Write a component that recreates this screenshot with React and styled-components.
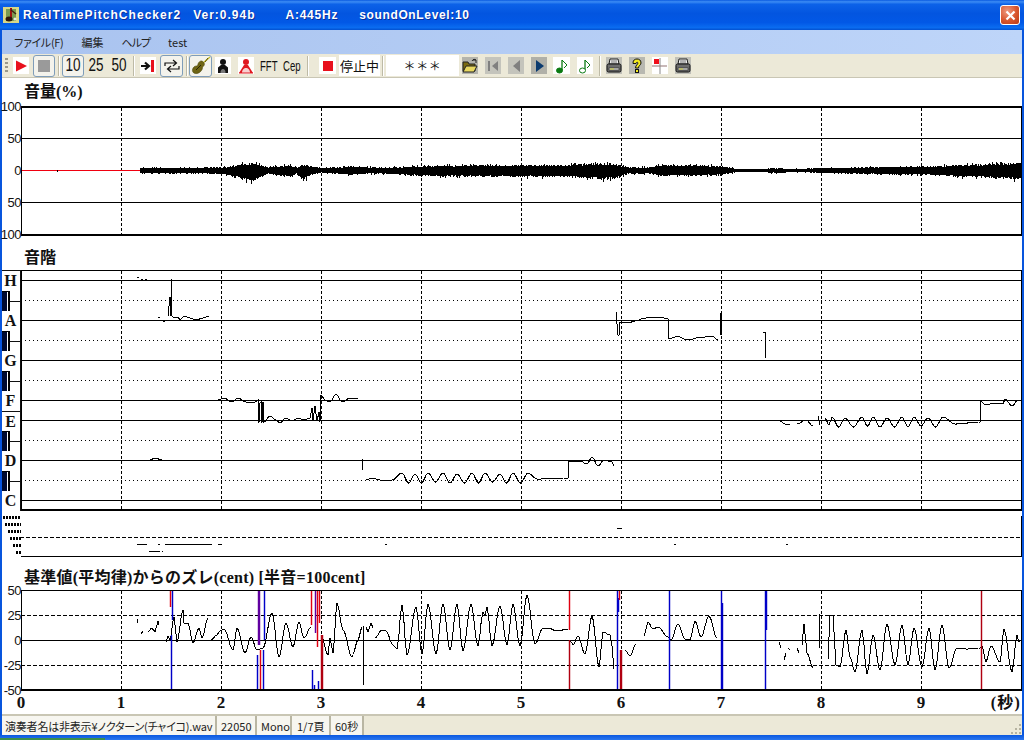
import React from 'react';
import styled, { createGlobalStyle } from 'styled-components';

const Global = createGlobalStyle`
  html, body { margin: 0; padding: 0; overflow: hidden; background: #0855dd; }
  #root { width: 1024px; height: 740px; }
`;

const UI = `"Liberation Sans", "Noto Sans CJK JP", sans-serif`;
const SERIF = `"Liberation Serif", "Noto Sans CJK JP", serif`;
const JP = `"Noto Sans CJK JP", "Liberation Sans", sans-serif`;

const Win = styled.div`
  width: 1024px; height: 740px; display: flex; flex-direction: column; overflow: hidden;
  background: #0855dd; font-family: ${UI};
`;
const TitleBar = styled.div`
  height: 30px; flex: none; box-sizing: border-box; display: flex; align-items: center; padding: 0 4px 0 3px;
  background: linear-gradient(180deg, #0a5ae0 0%, #3c8cf4 6%, #0c62e8 14%, #0355e0 45%, #0258e6 75%, #0a6cf0 92%, #0250d0 100%);
`;
const AppIcon = styled.svg`width: 16px; height: 16px; flex: none; margin-right: 4px;`;
const TitleText = styled.div`
  flex: 1; display: flex; color: #fff; font: bold 12px ${UI};
  text-shadow: 1px 1px 0 #0b2f9c; white-space: nowrap;
`;
const TitlePart = styled.span`margin-left: ${p => p.$ml || 0}px; letter-spacing: ${p => p.$ls}px;`;
const CloseBtn = styled.div`
  width: 20px; height: 20px; box-sizing: border-box; border: 1px solid #fff; border-radius: 3px; display: flex; align-items: center; justify-content: center;
  background: radial-gradient(circle at 35% 30%, #ee9a80, #d8552c 55%, #b93a17);
`;
const MenuBar = styled.div`
  height: 24px; flex: none; margin: 0 2px; display: flex; align-items: center;
  background: linear-gradient(90deg, #a9c3ef, #bed5f9); font: 11px ${JP}; font-feature-settings: "palt"; color: #222;
`;
const MenuItem = styled.span`margin-left: ${p => p.$ml}px; white-space: nowrap; letter-spacing: ${p => p.$ls || 0}px;`;
const Toolbar = styled.div`
  height: 24px; flex: none; box-sizing: border-box; margin: 0 2px; display: flex; align-items: center; padding-left: 3px;
  background: #ece9d8; border-bottom: 1px solid #c9c6b4;
`;
const Grip = styled.div`
  width: 3px; height: 16px; flex: none;
  background: repeating-linear-gradient(180deg, #9a9889 0 2px, transparent 2px 4px);
`;
const Sep = styled.div`
  width: 1px; height: 20px; flex: none; margin-left: ${p => p.$ml}px; margin-right: 1px;
  background: #bdbaa6; box-shadow: 1px 0 0 #fff;
`;
const Tool = styled.div`
  flex: none; display: flex; align-items: center; justify-content: center;
  width: ${p => p.$w || 16}px; height: ${p => (p.$on ? 22 : 17)}px; margin-left: ${p => p.$ml}px;
  background: ${p => (p.$on ? '#f4f3ec' : p.$bg || 'transparent')};
  border: ${p => (p.$on ? '1px solid #7f9db9' : 'none')}; border-radius: ${p => (p.$on ? 3 : 0)}px;
  box-sizing: border-box; color: #111;
`;
const Narrow = styled.span`
  display: inline-block; font: ${p => p.$s || 18}px ${UI}; transform: scaleX(${p => p.$x || 0.75}); white-space: nowrap;
`;
const ToolField = styled.div`
  flex: none; height: 21px; width: ${p => p.$w}px; margin-left: ${p => p.$ml}px; background: #fff; color: #111;
  display: flex; align-items: center; justify-content: center; padding-bottom: 1px; box-sizing: border-box;
  font: ${p => p.$s || 13}px ${JP}; white-space: nowrap; letter-spacing: ${p => p.$ls || 0}px;
`;
const Client = styled.div`
  height: 636px; flex: none; margin: 0 2px; background: #fff; display: flex; flex-direction: column;
`;
const Heading = styled.div`
  height: ${p => p.$h}px; flex: none; box-sizing: border-box; padding: ${p => p.$pt}px 0 0 22px;
  font: bold 16px/18px ${SERIF}; letter-spacing: ${p => p.$ls || 0}px; color: #111; white-space: nowrap;
`;
const PlotRow = styled.div`display: flex; flex: none; height: ${p => p.$h}px;`;
const Axis = styled.div`
  width: 19px; flex: none; display: flex; flex-direction: column; margin-top: ${p => -p.$step / 2}px; position: relative; z-index: 1;
`;
const AxisLabel = styled.div`
  height: ${p => p.$step}px; flex: none; display: flex; align-items: center; justify-content: flex-end;
  font: 13px ${UI}; color: #111; letter-spacing: -0.5px; white-space: nowrap;
`;
const Plot = styled.svg`
  display: block; flex: none; width: ${p => p.$w || 1001}px; height: ${p => p.$h}px; shape-rendering: crispEdges;
`;
const KeyColumn = styled.div`
  width: 18px; flex: none; border-right: 1px solid #111; border-top: 1px solid #111;
  display: flex; flex-direction: column; height: 240px;
`;
const WhiteKey = styled.div`
  height: 20px; flex: none; box-sizing: border-box; display: flex; align-items: center; justify-content: center;
  padding-right: 1px; font: bold 16px/16px ${SERIF}; color: #111; border-top: ${p => (p.$line ? '1px solid #111' : 'none')};
`;
const BlackKey = styled.div`
  height: 20px; flex: none; box-sizing: border-box; position: relative; width: 8px;
  background: linear-gradient(90deg, #000a30 0 5px, #fff 5px 6px, #000 6px); border-top: 1px solid #000;
  &::after { content: ''; position: absolute; left: 8px; top: 9px; width: 10px; height: 1px; background: #111; }
`;
const Ticks = styled.div`
  height: 23px; flex: none; display: flex; align-items: center; font: bold 17px/18px ${SERIF}; color: #111; padding-top: 1px; box-sizing: border-box;
`;
const Tick = styled.div`width: 100px; flex: none; text-align: center; margin-left: ${p => p.$ml || 0}px;`;
const Unit = styled.div`margin-left: auto; margin-right: 1px; white-space: nowrap; font-size: 16px; letter-spacing: 1.2px;`;
const Status = styled.div`
  height: 21px; flex: none; margin: 0 2px; background: #ece9d8; border-top: 2px solid #c9c6b4; box-sizing: border-box;
  display: flex; align-items: stretch; font: 11px ${JP}; font-feature-settings: "palt"; color: #222;
`;
const StatusCell = styled.div`
  width: ${p => p.$w}px; flex: none; box-sizing: border-box; background: #f7f6f0; border-right: 2px solid #b9b6a3;
  display: flex; align-items: center; padding-left: ${p => p.$pl || 0}px; white-space: nowrap; letter-spacing: ${p => p.$ls || 0}px;
`;
const StatusFill = styled.div`flex: 1; display: flex; justify-content: flex-end; align-items: flex-end;`;
const GripSvg = styled.svg`width: 13px; height: 13px;`;
const BottomEdge = styled.div`height: 5px; flex: none; display: flex; align-items: flex-end; background: linear-gradient(180deg, #0a58e0, #2a76ee);`;
const StartPiece = styled.div`width: 105px; height: 2px; background: #3c8f4a;`;

// ---------- data helpers ----------
function rng(seed) { let s = seed; return () => { s = (s * 16807) % 2147483647; return s / 2147483647; }; }

const ENV = [[140,2.6,2.6],[170,2.2,2.6],[200,2.6,2.6],[225,3,3.6],[232,4,6],[240,6,8],[253,7,11],[262,5,6],[268,3,3],[290,5,6],[296,2.5,3],[303,6,10],[311,4,4],[321,2,2],[340,3,3],[353,4,4],[365,3,3],[387,2.5,3],[420,4,5],[480,5,6],[500,4.5,5.5],[520,5,6],[560,5,6],[585,6,7],[605,7,9],[620,5,7],[625,3,3],[650,3,3],[660,5,5],[680,5,5],[700,5,5],[720,4,4],[733,2,2],[737,.6,.6],[765,.6,.6],[768,2,2],[780,2,2],[790,1,1],[818,2,2],[900,3.5,4],[930,4,4],[960,5,6],[990,6,7],[1021,8,9]];
function envelope(x) {
  for (let i = 1; i < ENV.length; i++) {
    if (x <= ENV[i][0]) {
      const a = ENV[i - 1], b = ENV[i], t = (x - a[0]) / (b[0] - a[0]);
      return [a[1] + (b[1] - a[1]) * t, a[2] + (b[2] - a[2]) * t];
    }
  }
  return [0, 0];
}
function wavePath() {
  const r = rng(4711); let d = '';
  for (let x = 140; x < 1021; x++) {
    const [u, v] = envelope(x);
    const spike = () => { const k = r(); return k > 0.92 ? 1.25 : 0.72 + r() * 0.33; };
    const up = Math.max(0.6, u * spike());
    const dn = Math.max(0.6, v * spike());
    d += `M${x}.5 ${Math.round(170 - up)}V${Math.round(171 + dn)}`;
  }
  return d;
}
// Cosine-eased line through extrema, so that the peaks come out round.
function smooth(pts) {
  const out = [];
  for (let i = 0; i < pts.length - 1; i++) {
    const [x0, y0] = pts[i], [x1, y1] = pts[i + 1];
    const n = Math.max(1, Math.round((x1 - x0) / 1.5));
    for (let k = 0; k < n; k++) {
      const t = k / n, e = (1 - Math.cos(Math.PI * t)) / 2;
      out.push(`${(x0 + (x1 - x0) * t).toFixed(1)},${(y0 + (y1 - y0) * e).toFixed(1)}`);
    }
  }
  const l = pts[pts.length - 1];
  out.push(`${l[0]},${l[1]}`);
  return out.join(' ');
}
function scallop(peaks, top, bottom) {
  const p = [];
  peaks.forEach((x, i) => {
    p.push([x, top + (i % 3 === 1 ? 1 : 0)]);
    if (i < peaks.length - 1) p.push([(x + peaks[i + 1]) / 2, bottom - (i % 4 === 2 ? 1 : 0)]);
  });
  return p;
}

const X_GRID = [121, 221, 321, 421, 521, 621, 721, 821, 921];
const VolPath = wavePath();

const PITCH = [
  [[137,277],[139,278]], [[141,279],[143,279]], [[145,279],[147,279]],
  [[158,318],[160,317]], [[163,321],[165,321]],
  [[168,316],[170,297],[170,316],[171,297],[171,279],[172,316],[174,318],[178,317],[180,320],[184,316],[190,318],[196,320],[203,318],[209,316]],
  [[150,460],[155,458],[162,460]],
  [[210,400],[218,400],[224,398],[232,402],[238,398],[246,402],[255,402],[258,400],[258,422],[259,422],[260,403],[261,402],[261,422],[262,422],[263,402],[263,422],[264,422],[270,416],[276,420],[280,423],[286,418],[292,421],[298,418],[304,420],[310,418],[312,408],[313,420],[315,406],[317,421],[319,412],[320,422],[321,395],[325,400],[330,402],[336,394],[342,402],[350,398],[358,398]],
  [[362,459],[363,470]],
  [[366,480],[372,478],[380,480],[392,480],...scallop([402,415,428,443,457,472,485,500,513,528],473,483),[537,479],[568,478],[569,461],[580,461],[587,464],[592,457],[598,466],[604,460],[612,462],[614,466]],
  [[616,312],[618,335],[619,335],[620,322],[622,322],[628,323],[635,321],[645,318],[655,317],[665,318],[668,319],[669,339],[672,338],[678,336],[684,339],[690,340],[696,338],[705,337],[712,336],[718,340]],
  [[720,313],[721,335]], [[721,313],[722,335]],
  [[763,332],[765,332],[766,358]],
  [[780,421],[785,424],[790,425]], [[797,424],[806,420],[813,426]], [[818,416],[820,425]],
  [[825,418],[829,425],...scallop([832,845,862,873,887,902,914,928,943],417,427),[955,424],[980,422],[981,401],[985,405],[995,403],[1003,404],[1005,399],[1012,406],[1018,400],[1021,400]],
];

const CENT = [
  [[137,619],[138,623]], [[141,634],[143,631]], [[148,632],[152,628],[155,632],[158,621],[159,625]],
  [[166,642],[168,636],[170,640],[174,617],[177,642],[183,610],[184,623],[188,623],[193,643],[199,628],[202,638],[208,618]],
  [[211,640],[217,635],[220,631],[224,629],[233,650],[237,628],[245,653],[251,637],[257,650],[263,648],[272,613],[279,657],[286,623],[293,647],[299,622],[304,638],[311,627]],
  [[321,635],[328,655],[330,638],[333,653],[337,603],[343,630],[352,657],[358,640],[362,627]],
  [[363,626],[363,685]],
  [[366,627],[368,632],[371,623],[373,628]],
  [[375,638],[382,630],[386,631],[393,645],[397,649],[402,605],[407,655],[416,607],[422,654],[428,604],[436,654],[443,604],[450,650],[457,604],[463,651],[471,604],[478,646],[483,612],[485,616],[487,607],[492,646],[500,606],[507,645],[513,604],[520,646],[527,595],[535,644],[543,628],[548,628],[557,631],[568,629]],
  [[570,640],[573,645],[578,636],[585,654],[592,616],[599,667],[603,632],[610,635],[612,646],[614,669]],
  [[625,650],[630,656],[636,644]],
  [[644,636],[648,622],[653,629],[658,627],[668,637],[671,640],[678,624],[685,639],[690,640],[695,621],[701,637],[709,616],[717,638]],
  [[779,642],[781,648]], [[784,660],[786,653]], [[788,648],[790,650]], [[797,648],[799,653]],
  [[802,645],[804,624],[807,653],[813,668]],
  [[819,613],[820,648]],
  [[828,660],[830,615],[833,615],[836,665],[840,667],[846,630],[850,657],[855,672],[862,630],[867,674],[873,635],[880,670],[887,624],[895,665],[902,625],[908,665],[914,628],[922,667],[929,628],[935,670],[942,625],[949,668],[957,648],[967,649],[980,648],[982,646],[986,662],[991,646],[1000,662],[1004,629],[1012,672],[1017,635],[1019,642],[1021,640]],
];

const BLUE = '#0000c8', RED = '#e00010', DKRED = '#b00010', PURPLE = '#6000a0';
const MARKS = [
  [170, 590, 607, RED, 1], [172, 590, 620, BLUE, 1], [171, 635, 690, BLUE, 1],
  [258, 590, 645, PURPLE, 2], [264, 590, 640, BLUE, 1], [257, 655, 690, BLUE, 1], [260, 650, 690, RED, 1], [263, 650, 690, BLUE, 1],
  [311, 590, 625, RED, 1], [315, 590, 633, PURPLE, 1], [317, 590, 647, RED, 1], [319, 590, 623, RED, 1],
  [312, 670, 690, BLUE, 1], [318, 681, 690, BLUE, 1], [314, 685, 690, BLUE, 1], [321, 635, 690, DKRED, 2],
  [569, 590, 630, RED, 1], [569, 640, 690, DKRED, 1],
  [617, 590, 690, BLUE, 1], [618, 598, 612, BLUE, 1], [619, 590, 600, RED, 1], [620, 650, 690, DKRED, 2],
  [669, 590, 690, BLUE, 1], [721, 590, 690, BLUE, 1], [722, 603, 690, BLUE, 1],
  [765, 590, 690, BLUE, 1], [766, 590, 630, BLUE, 1], [981, 590, 690, DKRED, 1],
];

const Strips = [
  [137, 147, 544], [158, 160, 544], [165, 212, 544], [218, 222, 544],
  [149, 160, 551], [162, 163, 551], [617, 622, 528], [385, 387, 544], [674, 676, 544], [786, 788, 544],
  [540, 541, 537], [620, 623, 537],
];
const DOT_ROWS = [[3, 516], [5, 523], [8, 530], [10, 537], [13, 544], [16, 551]];

const Grid = ({ y0, y1 }) => (
  <g stroke="#000" strokeDasharray="3 2" fill="none">
    {X_GRID.map(x => <line key={x} x1={x + 0.5} x2={x + 0.5} y1={y0} y2={y1} />)}
  </g>
);
const HLine = ({ y, kind, x0 = 21 }) => (
  <line x1={x0} x2="1022" y1={y + 0.5} y2={y + 0.5} stroke="#000"
    strokeDasharray={kind === 'dash' ? '4 2' : kind === 'dot' ? '1 3' : undefined} />
);

const VolumeChart = () => (
  <Plot $h={130} viewBox="21 106 1001 130">
    <Grid y0={108} y1={234} />
    <HLine y={138} /><HLine y={170} /><HLine y={202} />
    <path d={VolPath} stroke="#000" fill="none" />
    <line x1="21" x2="140" y1="170.5" y2="170.5" stroke="#f00010" />
    <line x1="57.5" x2="57.5" y1="170" y2="172" stroke="#000" />
    <rect x="21" y="106" width="1001" height="2" fill="#000" />
    <rect x="21" y="234" width="1001" height="2" fill="#000" />
    <rect x="21" y="106" width="1" height="130" fill="#000" />
    <rect x="1021" y="106" width="1" height="130" fill="#000" />
  </Plot>
);

const PitchChart = () => (
  <Plot $h={241} viewBox="21 270 1001 241">
    <Grid y0={271} y1={509} />
    {[280, 320, 360, 400, 420, 460, 500].map(y => <HLine key={y} y={y} />)}
    {[300, 340, 380, 440, 480].map(y => <HLine key={y} y={y} kind="dot" />)}
    {PITCH.map((p, i) => <polyline key={i} points={smooth(p)} fill="none" stroke="#000" />)}
    <rect x="21" y="270" width="1001" height="1" fill="#000" />
    <rect x="21" y="509" width="1001" height="2" fill="#000" />
    <rect x="21" y="270" width="1" height="241" fill="#000" />
    <rect x="1021" y="270" width="1" height="241" fill="#000" />
  </Plot>
);

const StripChart = () => (
  <Plot $w={1020} $h={47} viewBox="2 511 1020 47">
    {DOT_ROWS.map(([x, y]) => (
      <g key={y} fill="#000">
        <rect x={x} y={y} width={21 - x} height="3" fill="#000" />
        {Array.from({ length: Math.ceil((21 - x) / 3) }, (_, i) => (
          <rect key={i} x={x + i * 3 + 2} y={y} width="1" height="3" fill="#fff" />
        ))}
      </g>
    ))}
    <HLine y={537} kind="dash" x0={20} />
    <HLine y={556} x0={21} />
    {Strips.map(([a, b, y], i) => <rect key={i} x={a} y={y} width={b - a} height="1" fill="#000" />)}
    <rect x="1021" y="516" width="1" height="41" fill="#000" />
  </Plot>
);

const CentChart = () => (
  <Plot $h={101} viewBox="21 590 1001 101">
    <Grid y0={591} y1={689} />
    <HLine y={615} kind="dash" /><HLine y={640} /><HLine y={665} kind="dash" />
    {CENT.map((p, i) => <polyline key={i} points={smooth(p)} fill="none" stroke="#000" />)}
    {MARKS.map(([x, a, b, c, w], i) => (
      <g key={i} fill={c}>
        <rect x={x - 1} y={a} width={w + 2} height={b - a} opacity="0.22" />
        <rect x={x} y={a} width={w} height={b - a} />
      </g>
    ))}
    <rect x="21" y="590" width="1001" height="1" fill="#000" />
    <rect x="21" y="689" width="1001" height="2" fill="#000" />
    <rect x="21" y="590" width="1" height="101" fill="#000" />
    <rect x="1021" y="590" width="1" height="101" fill="#000" />
  </Plot>
);

// ---------- icons ----------
const Ic = ({ children, w = 16, h = 16 }) => <svg width={w} height={h} viewBox={`0 0 ${w} ${h}`}>{children}</svg>;
const PersonBlack = () => (
  <>
    <circle cx="8" cy="4" r="3" fill="#111" />
    <path d="M3 15V9.500L6 7H10L13 9.500V15Z" fill="#111" />
    <path d="M5.500 15C5.500 12 6.500 11 8 11S10.500 12 10.500 15Z" fill="#777" />
  </>
);
const PersonRed = () => (
  <>
    <circle cx="8" cy="4" r="3" fill="#e01820" />
    <path d="M1 15L6 7H10L15 15Z" fill="#e01820" />
    <path d="M4 15C4 11.500 6 10 8 10S12 11.500 12 15Z" fill="#f8d0d0" />
    <path d="M1 15H15" stroke="#e01820" />
  </>
);
const Printer = () => (
  <Ic>
    <path d="M4 1H12L13 6H3Z" fill="#eee" stroke="#222" />
    <path d="M5 3H11M5 5H11" stroke="#777" />
    <rect x="1" y="6" width="14" height="8" rx="1.500" fill="#6c6c6c" stroke="#111" />
    <rect x="3" y="10" width="10" height="2" fill="#ddd" stroke="#222" strokeWidth=".6" />
    <rect x="4" y="10.500" width="4" height="1" fill="#cc3" />
  </Ic>
);
const Note = ({ hollow }) => (
  <Ic>
    <path d="M8 2V12" stroke="#0a7a12" strokeWidth="1.300" />
    <path d="M8 2L13 7L10 10" stroke="#0a7a12" fill="none" />
    <ellipse cx="5.500" cy="12.500" rx="3" ry="2.500" fill={hollow ? '#fff' : '#0a7a12'} stroke="#0a7a12" />
  </Ic>
);
const Violin = () => (
  <svg width="20" height="19" viewBox="0 0 20 19">
    <path d="M19 1L12 7" stroke="#c8c030" strokeWidth="1.400" />
    <path d="M17 2L14 6" stroke="#5a5008" />
    <path d="M11 5C13 6 14 8 13 9.500C12.500 10.500 11.500 10.500 11.500 11.500C11.500 14 9 17 6 17.500C3 18 1 16 1.500 13.500C2 11 4 10 5.500 10C6.500 10 6.800 9 7 8C7.500 6 9.500 4.500 11 5Z" fill="#6e6414" stroke="#4a4408" strokeWidth=".6" />
    <path d="M5 14L10 9" stroke="#2a2604" />
  </svg>
);

export default function App() {
  return (
    <Win>
      <Global />
      <TitleBar>
        <AppIcon viewBox="0 0 16 16">
          <rect width="16" height="16" fill="#d8d888" />
          <path d="M3 2H13V14H3Z" fill="#7a9a50" />
          <path d="M8 1V12" stroke="#a01010" strokeWidth="2" />
          <path d="M8 3L13 7" stroke="#402010" strokeWidth="1.500" />
          <ellipse cx="6" cy="12" rx="3.500" ry="2.500" fill="#301808" />
          <circle cx="12" cy="12" r="1.500" fill="#e8e8e8" />
        </AppIcon>
        <TitleText>
          <TitlePart $ls={1.03}>RealTimePitchChecker2</TitlePart>
          <TitlePart $ml={12} $ls={1}>Ver:0.94b</TitlePart>
          <TitlePart $ml={30} $ls={0.75}>A:445Hz</TitlePart>
          <TitlePart $ml={21} $ls={0.65}>soundOnLevel:10</TitlePart>
        </TitleText>
        <CloseBtn>
          <svg width="11" height="11" viewBox="0 0 11 11"><path d="M1.500 1.500L9.500 9.500M9.500 1.500L1.500 9.500" stroke="#fff" strokeWidth="2.200" /></svg>
        </CloseBtn>
      </TitleBar>

      <MenuBar>
        <MenuItem $ml={12} $ls={-0.3}>ファイル(F)</MenuItem>
        <MenuItem $ml={18}>編集</MenuItem>
        <MenuItem $ml={18} $ls={-1}>ヘルプ</MenuItem>
        <MenuItem $ml={18}>test</MenuItem>
      </MenuBar>

      <Toolbar>
        <Grip />
        <Tool $ml={5} $bg="#fff"><Ic><path d="M3 2.500L14 8L3 13.500Z" fill="#e8101c" /></Ic></Tool>
        <Tool $ml={4} $w={22} $on><Ic><rect x="2" y="2" width="12" height="12" fill="#9a9a9a" /></Ic></Tool>
        <Sep $ml={3} />
        <Tool $ml={2} $w={22} $on><Narrow>10</Narrow></Tool>
        <Tool $ml={3} $w={18}><Narrow>25</Narrow></Tool>
        <Tool $ml={5} $w={18}><Narrow>50</Narrow></Tool>
        <Sep $ml={5} />
        <Tool $ml={5} $bg="#fff">
          <Ic><path d="M1 8H8M5 4.500L9 8L5 11.500" stroke="#111" strokeWidth="2.200" fill="none" /><rect x="11" y="2" width="3" height="12" fill="#e8101c" /></Ic>
        </Tool>
        <Tool $ml={4} $w={23} $on>
          <Ic><path d="M1 8V5H12M9 2L12.500 5L9 8M15 8V11H4M7 8L3.500 11L7 14" stroke="#111" strokeWidth="1.200" fill="none" /></Ic>
        </Tool>
        <Sep $ml={3} />
        <Tool $ml={1} $w={23} $on><Violin /></Tool>
        <Tool $ml={3} $bg="#fff"><Ic><PersonBlack /></Ic></Tool>
        <Tool $ml={7} $bg="#fff"><Ic><PersonRed /></Ic></Tool>
        <Tool $ml={7}><Narrow $s={15} $x={0.64}>FFT</Narrow></Tool>
        <Tool $ml={7}><Narrow $s={15} $x={0.64}>Cep</Narrow></Tool>
        <Sep $ml={7} />
        <Tool $ml={10} $w={17} $bg="#fff"><Ic><rect x="3" y="3" width="10" height="10" fill="#e8101c" /></Ic></Tool>
        <ToolField $ml={3} $w={41}>停止中</ToolField>
        <Sep $ml={2} />
        <ToolField $ml={2} $w={73} $s={12} $ls={0.6}>＊＊＊</ToolField>
        <Tool $ml={3} $bg="#b4b4ac">
          <Ic>
            <path d="M1 4H6L7 6H13V13H1Z" fill="#7a6a10" stroke="#222" />
            <path d="M1 14L4 8H15L12 14Z" fill="#e8d860" stroke="#222" />
            <path d="M10 3C11 1 13 1 14 2M14 2V5M14 2H11" stroke="#222" fill="none" />
          </Ic>
        </Tool>
        <Tool $ml={7} $bg="#c4c4bc"><Ic><rect x="3" y="3" width="2" height="10" fill="#808080" /><path d="M13 3V13L7 8Z" fill="#808080" /></Ic></Tool>
        <Tool $ml={7} $bg="#c4c4bc"><Ic><path d="M12 2V14L5 8Z" fill="#808080" /></Ic></Tool>
        <Tool $ml={7} $bg="#b0b0a8"><Ic><path d="M5 2L13 8L5 14Z" fill="#0a3a6e" /></Ic></Tool>
        <Tool $ml={6} $w={17} $bg="#fff"><Note /></Tool>
        <Tool $ml={7} $bg="#fff"><Note hollow /></Tool>
        <Sep $ml={6} />
        <Tool $ml={5} $bg="#c0c0b8"><Printer /></Tool>
        <Tool $ml={7} $bg="#b8b8b0">
          <Ic><path d="M4 5C4 2 6 1 8 1S12 2 12 5C12 7 9.500 7.500 9.500 10H6.500C6.500 7 9 6.500 9 5C9 4 7 4 7 5.500H4Z" fill="#f4ec20" stroke="#111" /><rect x="6.500" y="11.500" width="3" height="3" fill="#f4ec20" stroke="#111" /></Ic>
        </Tool>
        <Tool $ml={7} $bg="#fff">
          <Ic><rect x="2" y="1" width="5" height="5" fill="#f0101c" /><path d="M0 8H15" stroke="#c8b8b8" strokeWidth="2" /><path d="M8 0V16" stroke="#888" /></Ic>
        </Tool>
        <Tool $ml={7} $bg="#c0c0b8"><Printer /></Tool>
      </Toolbar>

      <Client>
        <Heading $h={28} $pt={5}>音量(%)</Heading>
        <PlotRow $h={130}>
          <Axis $step={32}>
            {['100', '50', '0', '50', '100'].map((t, i) => <AxisLabel key={i} $step={32}>{t}</AxisLabel>)}
          </Axis>
          <VolumeChart />
        </PlotRow>

        <Heading $h={34} $pt={13}>音階</Heading>
        <PlotRow $h={241}>
          <KeyColumn>
            <WhiteKey>H</WhiteKey><BlackKey />
            <WhiteKey>A</WhiteKey><BlackKey />
            <WhiteKey>G</WhiteKey><BlackKey />
            <WhiteKey>F</WhiteKey><WhiteKey $line>E</WhiteKey><BlackKey />
            <WhiteKey>D</WhiteKey><BlackKey />
            <WhiteKey>C</WhiteKey>
          </KeyColumn>
          <PitchChart />
        </PlotRow>
        <PlotRow $h={47}><StripChart /></PlotRow>

        <Heading $h={32} $pt={11} $ls={0.24}>基準値(平均律)からのズレ(cent) [半音=100cent]</Heading>
        <PlotRow $h={101}>
          <Axis $step={25}>
            {['50', '25', '0', '-25', '-50'].map((t, i) => <AxisLabel key={i} $step={25}>{t}</AxisLabel>)}
          </Axis>
          <CentChart />
        </PlotRow>
        <Ticks>
          {Array.from({ length: 10 }, (_, i) => <Tick key={i} $ml={i === 0 ? -31 : 0}>{i}</Tick>)}
          <Unit>(秒)</Unit>
        </Ticks>
      </Client>

      <Status>
        <StatusCell $w={215} $pl={3} $ls={-0.2}>演奏者名は非表示¥ノクターン(チャイコ).wav</StatusCell>
        <StatusCell $w={40} $pl={4}>22050</StatusCell>
        <StatusCell $w={35} $pl={4}>Mono</StatusCell>
        <StatusCell $w={39} $pl={5}>1/7頁</StatusCell>
        <StatusCell $w={33} $pl={4}>60秒</StatusCell>
        <StatusFill>
          <GripSvg viewBox="0 0 13 13">
            {[[10, 10], [6, 10], [2, 10], [10, 6], [6, 6], [10, 2]].map(([x, y]) => <rect key={`${x}${y}`} x={x} y={y} width="2" height="2" fill="#b5b2a0" />)}
          </GripSvg>
        </StatusFill>
      </Status>
      <BottomEdge><StartPiece /></BottomEdge>
    </Win>
  );
}
